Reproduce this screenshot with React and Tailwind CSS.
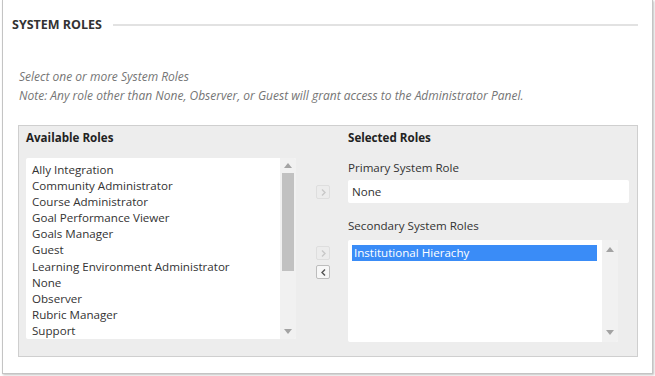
import { useState } from 'react';

const availableRoles = [
  'Ally Integration',
  'Community Administrator',
  'Course Administrator',
  'Goal Performance Viewer',
  'Goals Manager',
  'Guest',
  'Learning Environment Administrator',
  'None',
  'Observer',
  'Rubric Manager',
  'Support',
];

function Arrow({ up }) {
  return (
    <svg width="8" height="5" viewBox="0 0 8 5" className="mx-auto">
      <path d={up ? 'M0 5 L4 0 L8 5 Z' : 'M0 0 L4 5 L8 0 Z'} fill="#a3a3a3" />
    </svg>
  );
}

function MoveButton({ dir, disabled }) {
  return (
    <button
      className={`flex h-[14px] w-[14px] items-center justify-center rounded-[2px] border text-[10px] leading-none ${
        disabled ? 'border-[#dedede] bg-[#ececec] text-[#c8c8c8]' : 'border-[#bdbdbd] bg-[#f7f7f7] text-[#555]'
      }`}
    >
      <svg width="5" height="7" viewBox="0 0 5 7">
        <path
          d={dir === 'right' ? 'M1 0.5 L4 3.5 L1 6.5' : 'M4 0.5 L1 3.5 L4 6.5'}
          fill="none"
          stroke="currentColor"
          strokeWidth="1.4"
        />
      </svg>
    </button>
  );
}

export default function App() {
  const [selected] = useState('Institutional Hierachy');

  return (
    <div className="h-[376px] w-[655px] bg-white font-['Open_Sans',sans-serif] text-[#333]">
      <div className="ml-[2px] flex h-[374px] w-[651px] flex-col border border-t-0 border-[#c4c4c4] bg-white shadow-[1px_1px_2px_rgba(0,0,0,0.25)]">
        <div className="mt-[16px] flex items-center pl-[9px] pr-[14px]">
          <h2 className="text-[12.5px] font-bold leading-[18px] text-[#333]">SYSTEM ROLES</h2>
          <div className="ml-[11px] h-[2px] flex-1 bg-[#e2e2e2]" />
        </div>

        <div className="mt-[33px] pl-[16px] text-[12px] italic leading-[19px] text-[#757575]">
          <p>Select one or more System Roles</p>
          <p>Note: Any role other than None, Observer, or Guest will grant access to the Administrator Panel.</p>
        </div>

        <div className="ml-[15px] mt-[20px] flex h-[232px] w-[620px] border border-[#cfcfcf] bg-[#ededed]">
          <div className="flex flex-col pl-[7px] pt-[3px]">
            <h3 className="text-[11.6px] font-bold leading-[18px] text-[#222]">Available Roles</h3>
            <div className="mt-[11px] flex h-[181px] w-[270px] overflow-hidden rounded-[2px] bg-white">
              <ul className="flex-1 pl-[6px] pt-[4px] text-[11.6px] leading-[16.1px] text-[#333]">
                {availableRoles.map((r) => (
                  <li key={r} className="whitespace-nowrap">{r}</li>
                ))}
              </ul>
              <div className="flex w-[16px] flex-col items-center bg-[#f1f1f1] py-[5px]">
                <Arrow up />
                <div className="mt-[5px] h-[98px] w-[12px] bg-[#c1c1c1]" />
                <div className="flex-1" />
                <Arrow />
              </div>
            </div>
          </div>

          <div className="ml-[20px] flex w-[14px] flex-col pt-[59px]">
            <MoveButton dir="right" disabled />
            <div className="mt-[47px]">
              <MoveButton dir="right" disabled />
            </div>
            <div className="mt-[5px]">
              <MoveButton dir="left" />
            </div>
          </div>

          <div className="ml-[18px] flex flex-col pt-[3px]">
            <h3 className="text-[11.6px] font-bold leading-[18px] text-[#222]">Selected Roles</h3>
            <label className="mt-[12px] text-[11.6px] leading-[18px] text-[#333]">Primary System Role</label>
            <div className="mt-[3px] flex h-[23px] w-[281px] items-center rounded-[2px] bg-white pl-[4px] text-[11.6px] text-[#333]">
              None
            </div>
            <label className="mt-[14px] text-[11.6px] leading-[18px] text-[#333]">Secondary System Roles</label>
            <div className="mt-[5px] flex h-[102px] w-[270px] overflow-hidden rounded-[2px] bg-white">
              <div className="flex-1 pl-[4px] pr-[5px] pt-[5px]">
                <div className="h-[16px] bg-[#3a8cf7] pl-[2px] text-[11.6px] leading-[16px] text-white">{selected}</div>
              </div>
              <div className="flex w-[16px] flex-col bg-[#f1f1f1] py-[7px]">
                <Arrow up />
                <div className="flex-1" />
                <Arrow />
              </div>
            </div>
          </div>
        </div>
      </div>
    </div>
  );
}
